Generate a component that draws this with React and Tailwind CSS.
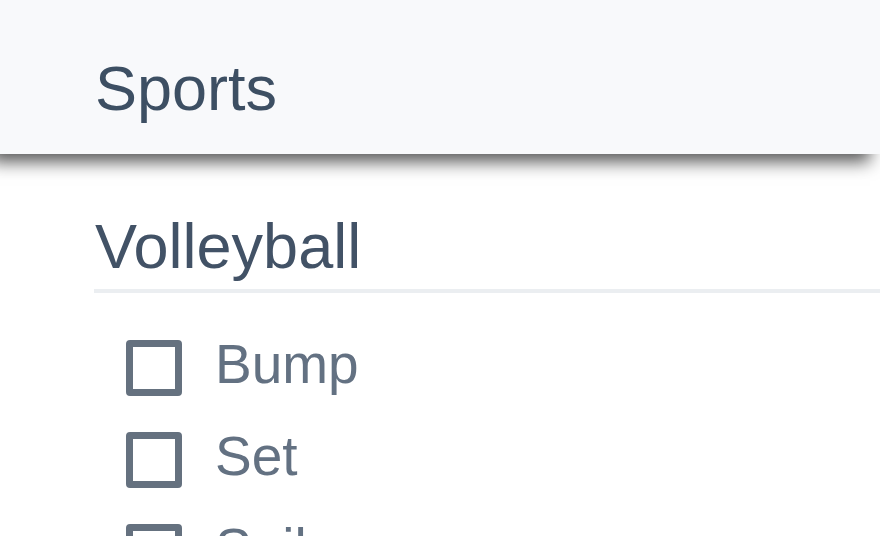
const skills = ['Bump', 'Set', 'Spike'];

const App = () => {
    return (
        <div className="h-screen bg-white overflow-hidden" style={{ fontFamily: '"Liberation Sans", Arial, sans-serif' }}>
            {/* Header */}
            <header className="relative z-10 h-[154px] bg-[#f8f9fb] pt-[56px] pl-[95px] shadow-[-10px_8px_16px_rgba(0,0,0,0.65)]">
                <h1 className="text-[63px] leading-[64px] text-[#3d4f63]">Sports</h1>
            </header>

            {/* Section */}
            <section className="ml-[94px] mt-[60px]">
                <h2 className="pl-px pb-[11px] text-[63px] leading-[64px] text-[#425266] border-b-4 border-[#ebeef1]">
                    Volleyball
                </h2>

                <ul className="mt-[47px] pl-[32px] flex flex-col gap-[36px]">
                    {skills.map((skill) => (
                        <li key={skill} className="flex items-start gap-[33px]">
                            <span className="w-[56px] h-[56px] shrink-0 rounded-[4px] border-[7px] border-[#65717f]"></span>
                            <span className="-mt-[4px] text-[55px] leading-[56px] text-[#637182]">{skill}</span>
                        </li>
                    ))}
                </ul>
            </section>
        </div>
    );
};

export default App;
